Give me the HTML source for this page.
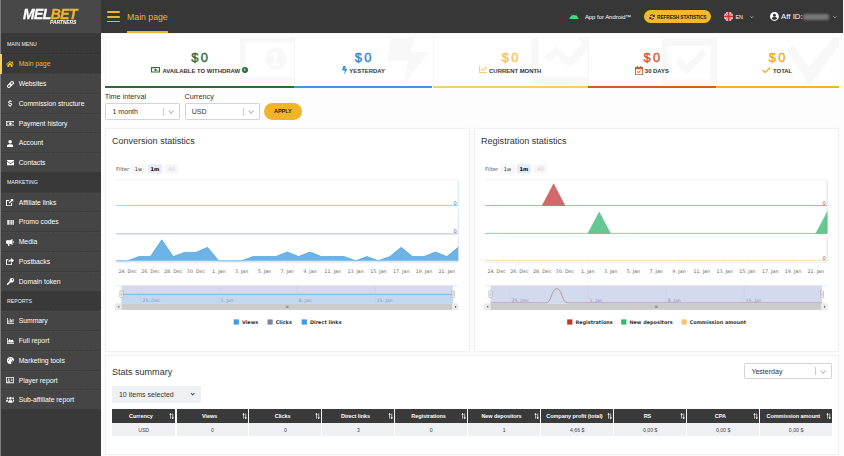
<!DOCTYPE html>
<html lang="en">
<head>
<meta charset="utf-8">
<title>Main page</title>
<style>
*{box-sizing:border-box;margin:0;padding:0}
html,body{width:844px;height:456px;overflow:hidden}
body{position:relative;background:#fdfdfd;font-family:"Liberation Sans",sans-serif;color:#333;font-size:7px}
#wrap{position:absolute;left:0;top:0;width:844px;height:456px;}
/* sidebar */
#side{position:absolute;left:0;top:0;width:100.5px;height:456px;background:#393939}
#side .redge{position:absolute;left:99.600px;top:33.400px;width:0.900px;height:423px;background-image:repeating-linear-gradient(180deg,rgba(0,0,0,.32) 0,rgba(0,0,0,.32) 1px,rgba(0,0,0,.08) 1px,rgba(0,0,0,.08) 2px)}
#side .edge{position:absolute;left:0;top:0;width:1.200px;height:456px;background:#7d7d7d}
#logo{position:absolute;left:0;top:0;width:100.5px;height:33.400px;background:#484848}
#logo .l1{position:absolute;left:22.600px;top:8.400px;font-size:14.300px;font-weight:bold;font-style:italic;color:#fff;letter-spacing:-0.6px;line-height:13px;transform:scaleX(0.975);transform-origin:0 0;-webkit-text-stroke:0.3px}
#logo .l1 b{color:#f0b429}
#logo .l2{position:absolute;left:50px;top:19.800px;font-size:5.100px;transform:scaleX(0.985);transform-origin:0 0;font-weight:bold;font-style:italic;color:#fff;letter-spacing:-0.1px;line-height:5px}
.mt{position:absolute;left:1px;width:99.5px;height:19.760px;background:#393939;color:#f2f2f2;font-size:5.200px;line-height:21.400px;padding-left:6px}
.mi{position:absolute;left:1px;width:99.5px;height:19.760px;background:#454545;color:#fff;font-size:6.800px;line-height:19.200px;padding-left:17.700px;background-image:repeating-linear-gradient(90deg,rgba(255,255,255,.065) 0,rgba(255,255,255,.065) 1px,transparent 1px,transparent 4.120px);background-size:100% 0.800px;background-repeat:no-repeat;border-top:0.500px solid rgba(0,0,0,.1);white-space:nowrap}
.mi.act{background-color:#393939;color:#f0b429}
.mi.act:before{content:"";position:absolute;left:-1px;top:-0.600px;width:1.800px;height:19.760px;background:#f5d06a;z-index:3}
.mi svg{position:absolute;fill:#fff}
.mi.act svg{fill:#f0b429}
/* header */
#head{position:absolute;left:100.5px;top:0;width:742.600px;height:33.300px;background:#373737;box-shadow:0 0.300px 0.600px rgba(0,0,0,.5)}
#burger{position:absolute;left:6.700px;top:11.300px;width:13px;height:11px}
#burger i{position:absolute;left:0;width:13px;height:1.700px;border-radius:1px;background:#f0b429}
#ptitle{position:absolute;left:26.600px;top:0;height:33.300px;line-height:34.800px;font-size:8.700px;color:#f0b429;border-bottom:2.300px solid #f0b429;white-space:nowrap}
.hr{position:absolute;top:0;height:33px;line-height:34.400px;color:#fff;white-space:nowrap}
#refresh{position:absolute;left:543.200px;top:10.100px;width:67.400px;height:13px;border-radius:6.500px;background:#f1b92d;color:#222;font-size:4.800px;font-weight:bold;line-height:15.400px;text-align:left;white-space:nowrap;padding-left:13.400px;letter-spacing:-0.12px}
/* cards */
.card{position:absolute;top:37.400px;height:50.500px;background:#fff;border-bottom:2.200px solid #000;box-shadow:inset 0.600px 0.600px 0 #f0f0f0;overflow:hidden}
.card .val{position:absolute;left:0;right:0;top:13.700px;text-align:center;font-size:12.900px;font-weight:normal;-webkit-text-stroke:0.400px;line-height:14px;letter-spacing:0.3px;word-spacing:-1.800px}
.card .lab{position:absolute;left:0;right:0;top:29.300px;text-align:center;font-size:5.930px;font-weight:bold;color:#333;line-height:8px;white-space:nowrap}
.card .ci{display:inline-block;vertical-align:middle;margin-right:2px;line-height:0;position:relative;top:-1.200px}
.card .ci svg{display:block}
.card .info{display:inline-block;width:6.300px;height:6.300px;border-radius:50%;background:#2f6a34;color:#fff;font-size:5px;font-weight:bold;line-height:6.500px;text-align:center;margin-left:1.500px;vertical-align:middle;position:relative;top:-1px;font-family:"Liberation Serif",serif}
.wm{position:absolute}
/* filters */
.flab{position:absolute;top:92.600px;font-size:7.250px;color:#333;line-height:8px}
.sel{position:absolute;height:16.600px;background:#fff;border:0.600px solid #d4d4d4;border-radius:1.300px;font-size:7.050px;line-height:15.400px;padding-left:6.200px;color:#333}
.sel:before{content:"";position:absolute;right:15.400px;top:3.500px;width:0.500px;height:8.300px;background:#ccc}
.sel:after{content:"";position:absolute;right:5.800px;top:5.200px;width:3.300px;height:3.300px;border-right:0.900px solid #b8b8b8;border-bottom:0.900px solid #b8b8b8;transform:rotate(45deg)}
#apply{position:absolute;left:264.200px;top:103px;width:37.400px;height:16.700px;border-radius:8.400px;background:#f0b429;color:#222;font-size:5.500px;font-weight:bold;line-height:17px;text-align:center}
/* panels */
.panel{position:absolute;background:#fff;border:0.600px solid #f1f1f1;box-shadow:0 0 1px #f4f4f4}
.ptl{position:absolute;font-size:9.050px;color:#333;line-height:10px;white-space:nowrap}
svg.chart{position:absolute;font-family:"DejaVu Sans","Liberation Sans",sans-serif}
svg.chart text{fill:#555}
svg.chart .flt{font-size:5.350px;fill:#666}
svg.chart .b{font-size:5.100px;fill:#333}
svg.chart .bs{font-size:5.100px;fill:#000;font-weight:bold}
svg.chart .bd{font-size:5.100px;fill:#ccc}
svg.chart .ax{font-size:5.100px;fill:#666}
svg.chart .xl{font-size:4.750px;fill:#666}
svg.chart .nl{font-size:4.600px;fill:#9094b4}
svg.chart .lg{font-size:4.950px;fill:#333;font-weight:bold}
/* table */
#isel{position:absolute;left:111.800px;top:385.900px;width:88.800px;height:16.800px;background:#eef0f4;font-size:7.050px;line-height:17px;padding-left:7.100px;color:#333}
#isel:after{content:"";position:absolute;left:79px;top:6.500px;width:2.400px;height:2.400px;border-right:0.600px solid #555;border-bottom:0.600px solid #555;transform:rotate(45deg)}
.th{position:absolute;top:408.600px;height:14.200px;background:#3a3a3a;color:#fff;font-size:5.500px;font-weight:bold;line-height:15.600px;text-align:center;border-right:0.550px solid #fff;white-space:nowrap;padding-right:5.500px;letter-spacing:-0.05px}
.th svg{position:absolute;right:1px;top:4.300px;width:5.200px;height:6.200px}
.td{position:absolute;top:422.800px;height:13px;background:#eef0f4;color:#444;font-size:5.200px;line-height:15.600px;text-align:center;border-right:0.550px solid #fff}
</style>
</head>
<body>
<div id="wrap">
<div id="side">
  <div id="logo"><div class="l1">MEL<b>BET</b></div><div class="l2">PARTNERS</div></div>
  <div class="mt" style="top:33.65px">MAIN MENU</div>
  <div class="mi act" style="top:53.41px"><svg viewBox="0 0 18 14" style="left:5.00px;top:6.79px;width:8.00px;height:6.22px"><path d="M9 0 .2 7.300l1.100 1.300L9 2.300l7.700 6.300 1.100-1.300-2.300-1.900V1h-2.300v2.500zM3 8.600 9 3.700l6 4.900V14h-4.300V9.800H7.300V14H3z"/></svg>Main page</div>
  <div class="mi" style="top:73.17px"><svg viewBox="0 0 16 16" style="left:5.50px;top:6.40px;width:7.00px;height:7.00px"><g transform="rotate(-45 8 8)" fill="none" stroke="#fff" stroke-width="2.300"><rect x="-0.300" y="5.100" width="9.600" height="5.800" rx="2.900"/><rect x="6.700" y="5.100" width="9.600" height="5.800" rx="2.900"/></g></svg>Websites</div>
  <div class="mi" style="top:92.93px"><svg viewBox="0 0 9 16" style="left:6.95px;top:6.26px;width:4.10px;height:7.29px"><path d="M3.600 0h1.900v1.700c1.600.2 2.800 1.100 3.200 2.500l-1.800.7C6.600 4 5.800 3.500 4.600 3.500c-1.300 0-2 .5-2 1.400 0 .8.600 1.200 2.500 1.600C7.500 7 9 7.800 9 10c0 1.700-1.300 2.900-3.500 3.100V16H3.600v-2.900C1.600 12.900.3 11.800 0 10.100l1.900-.5c.3 1.100 1.100 1.700 2.600 1.700 1.400 0 2.200-.5 2.200-1.500S5.900 8.500 4 8.100C1.600 7.600.4 6.800.4 4.800c0-1.700 1.300-2.900 3.200-3.200z"/></svg>Commission structure</div>
  <div class="mi" style="top:112.69px"><svg viewBox="0 0 20 12" style="left:4.60px;top:7.26px;width:8.80px;height:5.28px"><path fill-rule="evenodd" d="M0 0h20v12H0zM1.800 1.800v8.400h16.400V1.800zM10 3a3 3 0 1 1 0 6 3 3 0 0 1 0-6zM3 3h2.400A2.400 2.400 0 0 1 3 5.400zM17 3v2.400A2.400 2.400 0 0 1 14.600 3zM3 9V6.600A2.400 2.400 0 0 1 5.400 9zM17 9h-2.400A2.400 2.400 0 0 1 17 6.600z"/></svg>Payment history</div>
  <div class="mi" style="top:132.45px"><svg viewBox="0 0 14 16" style="left:5.85px;top:6.30px;width:6.30px;height:7.20px"><path d="M7 0a4 4 0 1 1 0 8 4 4 0 0 1 0-8zM0 16v-2.200C0 11.100 2.200 9.500 4.500 9.500h5c2.300 0 4.500 1.600 4.500 4.300V16z"/></svg>Account</div>
  <div class="mi" style="top:152.21px"><svg viewBox="0 0 16 12" style="left:5.50px;top:7.28px;width:7.00px;height:5.25px"><path d="M0 0h16v2.200L8 7.300 0 2.200zM0 4.200l8 5.100 8-5.100V12H0z"/></svg>Contacts</div>
  <div class="mt" style="top:171.97px">MARKETING</div>
  <div class="mi" style="top:191.73px"><svg viewBox="0 0 16 16" style="left:5.40px;top:6.30px;width:7.20px;height:7.20px"><path d="M9.300 0H16v6.700l-2.300-2.300-5.800 5.800-2.100-2.100 5.800-5.800zM0 2.500h7v2.200H2.200v9.100h9.100V9h2.200v7H0z"/></svg>Affiliate links</div>
  <div class="mi" style="top:211.49px"><svg viewBox="0 0 16 11" style="left:5.50px;top:7.49px;width:7.00px;height:4.81px"><path d="M0 0h1.600v11H0zM2.600 0h2.600v11H2.600zM6.200 0h1.100v11H6.200zM8.400 0h2.600v11H8.400zM12 0h1.100v11H12zM14.200 0H16v11h-1.800z"/></svg>Promo codes</div>
  <div class="mi" style="top:231.25px"><svg viewBox="0 0 18 16" style="left:5.00px;top:6.34px;width:8.00px;height:7.11px"><path d="M14.500 0v13.500L8.500 10.700H6.900l1.300 4.800H5.100L3.800 10.700H2A2 2 0 0 1 0 8.700V5a2 2 0 0 1 2-2h6.500zM15.800 4.600c1.300.3 2.200 1.100 2.200 2.200s-.9 1.900-2.200 2.200z"/></svg>Media</div>
  <div class="mi" style="top:251.01px"><svg viewBox="0 0 18 16" style="left:5.00px;top:6.34px;width:8.00px;height:7.11px"><path d="M18 5.800 11.800 0v3.300C7.500 3.400 5.200 6.200 5.200 10.500 6.500 8.300 8.400 7.400 11.800 7.400v3.800zM0 2.800h5.500V5H2.200v8.800H11V11.500h2.200V16H0z"/></svg>Postbacks</div>
  <div class="mi" style="top:270.77px"><svg viewBox="0 0 16 16" style="left:5.50px;top:6.40px;width:7.00px;height:7.00px"><path d="M11 0a5 5 0 1 1-1.700 9.700L8 11H6v2H4v2H2v1H0v-3l6.300-6.300A5 5 0 0 1 11 0zm1.300 2.500a1.600 1.600 0 1 0 0 3.200 1.600 1.600 0 0 0 0-3.200z"/></svg>Domain token</div>
  <div class="mt" style="top:290.53px">REPORTS</div>
  <div class="mi" style="top:310.29px"><svg viewBox="0 0 16 13" style="left:5.50px;top:7.06px;width:7.00px;height:5.69px"><path d="M0 0h1.800v11.200H16V13H0zM3.200 5.500h2v4.700h-2zM6.400 1.500h2v8.700h-2zM9.600 4h2v6.200h-2zM12.800 2.500h2v7.700h-2z"/></svg>Summary</div>
  <div class="mi" style="top:330.05px"><svg viewBox="0 0 16 13" style="left:5.50px;top:7.06px;width:7.00px;height:5.69px"><path d="M0 0h1.800v11.200H16V13H0zM3 10.200V6.500L6 2.500l3 3 2.800-2.300L15 6.500v3.700z"/></svg>Full report</div>
  <div class="mi" style="top:349.81px"><svg viewBox="0 0 16 16" style="left:5.50px;top:6.40px;width:7.00px;height:7.00px"><path d="M8 0a8 8 0 0 0 0 16c1.400 0 2.100-.9 2.100-1.900 0-.5-.2-.9-.5-1.300-.2-.3-.4-.7-.4-1.100 0-.9.700-1.500 1.500-1.500h1.900A3.400 3.400 0 0 0 16 6.800C16 3 12.400 0 8 0zM3.400 8.600a1.200 1.200 0 1 1 0-2.400 1.200 1.200 0 0 1 0 2.400zm2.300-3.400a1.200 1.200 0 1 1 0-2.400 1.200 1.200 0 0 1 0 2.400zm4.600 0a1.200 1.200 0 1 1 0-2.400 1.200 1.200 0 0 1 0 2.400zm2.500 3.400a1.200 1.200 0 1 1 0-2.400 1.200 1.200 0 0 1 0 2.400z"/></svg>Marketing tools</div>
  <div class="mi" style="top:369.57px"><svg viewBox="0 0 18 14" style="left:5.05px;top:6.83px;width:7.90px;height:6.14px"><path fill-rule="evenodd" d="M0 0h18v14H0zM1.800 1.800v10.400h14.400V1.800zM6.300 3.500a1.800 1.800 0 1 1 0 3.600 1.800 1.800 0 0 1 0-3.600zM3.300 10.600c0-1.500 1.300-2.600 3-2.600s3 1.100 3 2.600zM11 4.200h4v1.500h-4zM11 7h4v1.500h-4z"/></svg>Player report</div>
  <div class="mi" style="top:389.33px"><svg viewBox="0 0 20 13" style="left:4.60px;top:7.04px;width:8.80px;height:5.72px"><path d="M10 0a3 3 0 1 1 0 6 3 3 0 0 1 0-6zM3.600.8a2.200 2.200 0 1 1 0 4.400 2.200 2.200 0 0 1 0-4.400zm12.800 0a2.200 2.200 0 1 1 0 4.400 2.200 2.200 0 0 1 0-4.400zM5 13v-1.800C5 8.900 6.900 7.500 8.800 7.500h2.400c1.900 0 3.800 1.400 3.800 3.700V13zM0 11v-1.400C0 7.800 1.400 6.500 3.100 6.500c.8 0 1.500.2 2.100.6C4.100 8 3.500 9.400 3.500 11zM20 11h-3.500c0-1.600-.6-3-1.700-3.900.6-.4 1.300-.6 2.100-.6 1.700 0 3.100 1.300 3.100 3.100z"/></svg>Sub-affiliate report</div>
  <div class="redge"></div>
  <div class="edge"></div>
</div>
<div id="head">
  <div id="burger"><i style="top:0"></i><i style="top:4.700px"></i><i style="top:9.400px"></i></div>
  <div id="ptitle">Main page</div>
  <svg viewBox="0 0 20 12" style="position:absolute;left:468.100px;top:13.600px;width:10px;height:5.800px"><path fill="#3ddc84" d="M14.300 3.200 16 .4l-.6-.4-1.800 2.900A9 9 0 0 0 10 2.200c-1.300 0-2.500.3-3.600.7L4.600 0 4 .4l1.700 2.800C2.600 4.800.5 8 0 12h20c-.5-4-2.600-7.200-5.700-8.800z"/></svg>
  <div class="hr" style="left:484.400px;font-size:5.900px">App for Android™</div>
  <div id="refresh"><svg viewBox="0 0 16 16" style="position:absolute;left:5.100px;top:4.200px;width:6px;height:6px"><path d="M13.400 6.600A5.600 5.600 0 0 0 3 5.200M2.600 9.400A5.600 5.600 0 0 0 13 10.800" stroke="#222" stroke-width="2.600" fill="none"/><path d="M15.300 1.200v6.300H9zM.7 14.800V8.500H7z" fill="#222"/></svg>REFRESH STATISTICS</div>
  <svg viewBox="0 0 16 16" style="position:absolute;left:623.400px;top:12.100px;width:9.200px;height:9.200px"><defs><clipPath id="fc"><circle cx="8" cy="8" r="8"/></clipPath></defs><g clip-path="url(#fc)"><rect width="16" height="16" fill="#e9e6e6"/><path d="M0 0l16 16M16 0L0 16" stroke="#d9534f" stroke-width="1.800"/><path d="M5.200 0h5.600v16H5.200zM0 5.200h16v5.600H0z" fill="#f4f4f4"/><path d="M6.300 0h3.400v16H6.300zM0 6.300h16v3.400H0z" fill="#d0333a"/></g></svg>
  <div class="hr" style="left:635px;font-size:5.400px">EN</div>
  <svg viewBox="0 0 10 6" style="position:absolute;left:649.800px;top:15.700px;width:3.600px;height:2.200px"><path d="M1 1l4 4 4-4" fill="none" stroke="#e4e4e4" stroke-width="1.700"/></svg>
  <svg viewBox="0 0 16 16" style="position:absolute;left:669.500px;top:12.200px;width:8.900px;height:8.900px"><path fill-rule="evenodd" fill="#fff" d="M8 0a8 8 0 1 1 0 16A8 8 0 0 1 8 0zm0 3a2.800 2.800 0 1 0 0 5.600A2.800 2.800 0 0 0 8 3zm0 11.200c2 0 3.800-1 4.800-2.600-.1-1.600-3.200-2.400-4.800-2.400s-4.700.8-4.800 2.400c1 1.600 2.800 2.600 4.800 2.600z"/></svg>
  <div class="hr" style="left:680.600px;font-size:7.800px">Aff ID:</div>
  <div style="position:absolute;left:702.500px;top:13.800px;width:25.500px;height:6.500px;background:#8d8d8d;border-radius:2px;filter:blur(1.100px);opacity:.75"></div>
  <svg viewBox="0 0 10 6" style="position:absolute;left:732.900px;top:15.800px;width:3.600px;height:2.200px"><path d="M1 1l4 4 4-4" fill="none" stroke="#eee" stroke-width="1.700"/></svg>
</div>

<div class="card" style="left:105.10px;width:189.10px;border-bottom-color:#2e6b30"><svg class="wm" viewBox="0 0 60 50" style="right:0;top:0;width:60px;height:50px"><path fill-rule="evenodd" fill="#f8f8f8" d="M6 0h70v45.500H6zM11.500 5.500a5 5 0 0 1-0 0v34.500h60V5.500zM42 10.500a11 11 0 1 1 0 22 11 11 0 0 1 0-22zM40.200 15l-3 1.800v2.500l2.400-.8v7.500h-2.600v2.500h8.500v-2.500h-2.500V15z"/></svg><div class="val" style="color:#2f6a34">$ 0</div><div class="lab"><span class="ci" style="fill:#2e6b30"><svg viewBox="0 0 20 12" style="width:9px;height:5.400px"><path fill-rule="evenodd" d="M0 0h20v12H0zM2.200 2.200v7.600h15.600V2.200z"/><circle cx="10" cy="6" r="2.700"/><path d="M3.400 3.200h2.200v1.600H3.400zM14.400 7.200h2.200v1.600h-2.200z"/></svg></span>AVAILABLE TO WITHDRAW<span class="info">i</span></div></div>
<div class="card" style="left:294.20px;width:138.30px;border-bottom-color:#3b9cdd"><svg class="wm" viewBox="0 0 50 50" style="right:0;top:0;width:50px;height:50px"><path fill="#f8f8f8" d="M8.500 0h24.900l-5 15.300h18.700L22.100 46.500l3.900-22.500H5.300z"/></svg><div class="val" style="color:#2f86c8">$ 0</div><div class="lab"><span class="ci" style="fill:#3b9cdd"><svg viewBox="0 0 10 16" style="width:5.600px;height:9px"><path d="M2 0h5L5.800 5H10L3.500 16 5 8H0z"/></svg></span>YESTERDAY</div></div>
<div class="card" style="left:432.50px;width:155.50px;border-bottom-color:#f9cc68"><svg class="wm" viewBox="0 0 60 50" style="right:0;top:0;width:60px;height:50px"><path fill="#f8f8f8" d="M3.500 0h7.500v40h49v7.500H3.500zM16 20l12.500-11 12.500 12.500 14-15.500-6-5h11v16l-0-0-0 0V12L41.500 30.500 28.500 18.500 21 25.500z"/></svg><div class="val" style="color:#f7c259">$ 0</div><div class="lab"><span class="ci" style="fill:#f9cc68"><svg viewBox="0 0 16 14" style="width:8px;height:7px"><path d="M0 0h1.800v12.200H16V14H0zM3.200 9.500 6.500 5l2.700 2.300L12.500 3l-1.500-1.300h4.500v4.300L14 4.500 9.500 10 6.800 7.700 4.600 10.600z"/></svg></span>CURRENT MONTH</div></div>
<div class="card" style="left:588.00px;width:127.90px;border-bottom-color:#cc5f2c"><svg class="wm" viewBox="0 0 56 50" style="right:0;top:0;width:56px;height:50px"><path fill-rule="evenodd" fill="#f8f8f8" d="M2 0h54v48H2zM7.500 9v33.500h43V9zM15.500 26l5-5 6.500 6.500 15-15 5 5-20 20z"/></svg><div class="val" style="color:#d05a2e">$ 0</div><div class="lab"><span class="ci" style="fill:#cc5f2c"><svg viewBox="0 0 14 16" style="width:8px;height:9.200px"><path fill-rule="evenodd" d="M3 0h1.800v1.800h4.400V0H11v1.800h3V16H0V1.800h3zM1.600 5.500v8.900h10.800V5.500zM6.200 12.500 3.600 9.900l1.100-1.100 1.500 1.500 3.100-3.100 1.100 1.100z"/></svg></span>30 DAYS</div></div>
<div class="card" style="left:715.90px;width:122.70px;border-bottom-color:#f0b429"><svg class="wm" viewBox="0 0 60 50" style="right:0;top:0;width:60px;height:50px"><path fill="#f8f8f8" d="M7.500 12.500l6.500-4.500 15.500 22L55 0h5v9L30.500 49.500z"/></svg><div class="val" style="color:#f0ac1c">$ 0</div><div class="lab"><span class="ci" style="fill:#f0b429"><svg viewBox="0 0 16 12" style="width:8.800px;height:6.600px"><path d="M5.500 12 0 6.500l2-2 3.500 3.500L14 0l2 2z"/></svg></span>TOTAL</div></div>

<div class="flab" style="left:104.800px">Time interval</div>
<div class="flab" style="left:184.400px">Currency</div>
<div class="sel" style="left:105.300px;top:103.300px;width:74.400px">1 month</div>
<div class="sel" style="left:184.500px;top:103.300px;width:75.100px">USD</div>
<div id="apply">APPLY</div>

<div class="panel" style="left:104.900px;top:127.800px;width:365.300px;height:224px"></div>
<div class="panel" style="left:474px;top:127.800px;width:365px;height:224px"></div>
<div class="ptl" style="left:111.900px;top:136px">Conversion statistics</div>
<div class="ptl" style="left:481px;top:136px">Registration statistics</div>
<svg class="chart" viewBox="0 0 365 222" width="365" height="222" style="left:103.90px;top:128.500px">
<text x="12.0" y="42.00" class="flt">Filter</text>
<rect x="27.30" y="35.30" width="14.20" height="9.3" rx="0.9" fill="#f7f7f7"/>
<text x="34.40" y="41.80" class="b" text-anchor="middle">1w</text>
<rect x="43.90" y="35.30" width="14.20" height="9.3" rx="0.9" fill="#e6ebf5"/>
<text x="51.00" y="41.80" class="bs" text-anchor="middle">1m</text>
<rect x="60.50" y="35.30" width="13.80" height="9.3" rx="0.9" fill="#f7f7f7"/>
<text x="67.40" y="41.80" class="bd" text-anchor="middle">All</text>
<path d="M12.20 50.80H354.20" stroke="#e6e6e6" stroke-width="0.6"/>
<path d="M12.20 77.80H354.20" stroke="#ececec" stroke-width="0.5"/>
<path d="M354.20 51.60V76.50" stroke="#c3d0ea" stroke-width="0.7"/>
<text x="352.70" y="75.60" class="ax" text-anchor="end">0</text>
<path d="M12.20 106.00H354.20" stroke="#ececec" stroke-width="0.5"/>
<path d="M354.20 79.60V104.70" stroke="#c3d0ea" stroke-width="0.7"/>
<text x="352.70" y="103.80" class="ax" text-anchor="end">0</text>
<path d="M12.20 133.30H354.20" stroke="#ececec" stroke-width="0.5"/>
<path d="M354.20 107.60V132.00" stroke="#c3d0ea" stroke-width="0.7"/>
<text x="352.70" y="131.10" class="ax" text-anchor="end">0</text>
<path d="M12.20 76.40H354.20" stroke="#8ed0ee" stroke-width="0.9"/>
<path d="M12.20 104.80H354.20" stroke="#9b9fd0" stroke-width="0.7"/>
<path d="M12.20 131.80 L12.20 131.80 L23.60 131.80 L35.00 127.60 L46.40 127.60 L57.80 110.80 L69.20 127.60 L80.60 123.40 L92.00 123.40 L103.40 118.36 L114.80 131.80 L126.20 131.80 L137.60 131.80 L149.00 127.60 L160.40 127.60 L171.80 127.60 L183.20 122.98 L194.60 127.60 L206.00 122.98 L217.40 127.60 L228.80 127.60 L240.20 127.60 L251.60 131.80 L263.00 127.60 L274.40 131.80 L285.80 127.60 L297.20 118.36 L308.60 127.60 L320.00 127.60 L331.40 122.98 L342.80 127.60 L354.20 118.36 L354.20 131.80Z" fill="#6db3e6"/>
<path d="M12.20 131.80 L12.20 131.80 L23.60 131.80 L35.00 127.60 L46.40 127.60 L57.80 110.80 L69.20 127.60 L80.60 123.40 L92.00 123.40 L103.40 118.36 L114.80 131.80 L126.20 131.80 L137.60 131.80 L149.00 127.60 L160.40 127.60 L171.80 127.60 L183.20 122.98 L194.60 127.60 L206.00 122.98 L217.40 127.60 L228.80 127.60 L240.20 127.60 L251.60 131.80 L263.00 127.60 L274.40 131.80 L285.80 127.60 L297.20 118.36 L308.60 127.60 L320.00 127.60 L331.40 122.98 L342.80 127.60 L354.20 118.36" fill="none" stroke="#459fe0" stroke-width="0.7"/>
<path d="M12.20 132.00H354.20" stroke="#7cc4ec" stroke-width="0.6"/>
<path d="M12.20 133.70H354.20" stroke="#dfe6f3" stroke-width="0.5"/>
<path d="M23.60 133.70v2.200" stroke="#dfe6f3" stroke-width="0.5"/>
<text x="23.60" y="144.00" class="xl" text-anchor="middle">24. Dec</text>
<path d="M46.40 133.70v2.200" stroke="#dfe6f3" stroke-width="0.5"/>
<text x="46.40" y="144.00" class="xl" text-anchor="middle">26. Dec</text>
<path d="M69.20 133.70v2.200" stroke="#dfe6f3" stroke-width="0.5"/>
<text x="69.20" y="144.00" class="xl" text-anchor="middle">28. Dec</text>
<path d="M92.00 133.70v2.200" stroke="#dfe6f3" stroke-width="0.5"/>
<text x="92.00" y="144.00" class="xl" text-anchor="middle">30. Dec</text>
<path d="M114.80 133.70v2.200" stroke="#dfe6f3" stroke-width="0.5"/>
<text x="114.80" y="144.00" class="xl" text-anchor="middle">1. Jan</text>
<path d="M137.60 133.70v2.200" stroke="#dfe6f3" stroke-width="0.5"/>
<text x="137.60" y="144.00" class="xl" text-anchor="middle">3. Jan</text>
<path d="M160.40 133.70v2.200" stroke="#dfe6f3" stroke-width="0.5"/>
<text x="160.40" y="144.00" class="xl" text-anchor="middle">5. Jan</text>
<path d="M183.20 133.70v2.200" stroke="#dfe6f3" stroke-width="0.5"/>
<text x="183.20" y="144.00" class="xl" text-anchor="middle">7. Jan</text>
<path d="M206.00 133.70v2.200" stroke="#dfe6f3" stroke-width="0.5"/>
<text x="206.00" y="144.00" class="xl" text-anchor="middle">9. Jan</text>
<path d="M228.80 133.70v2.200" stroke="#dfe6f3" stroke-width="0.5"/>
<text x="228.80" y="144.00" class="xl" text-anchor="middle">11. Jan</text>
<path d="M251.60 133.70v2.200" stroke="#dfe6f3" stroke-width="0.5"/>
<text x="251.60" y="144.00" class="xl" text-anchor="middle">13. Jan</text>
<path d="M274.40 133.70v2.200" stroke="#dfe6f3" stroke-width="0.5"/>
<text x="274.40" y="144.00" class="xl" text-anchor="middle">15. Jan</text>
<path d="M297.20 133.70v2.200" stroke="#dfe6f3" stroke-width="0.5"/>
<text x="297.20" y="144.00" class="xl" text-anchor="middle">17. Jan</text>
<path d="M320.00 133.70v2.200" stroke="#dfe6f3" stroke-width="0.5"/>
<text x="320.00" y="144.00" class="xl" text-anchor="middle">19. Jan</text>
<path d="M342.80 133.70v2.200" stroke="#dfe6f3" stroke-width="0.5"/>
<text x="342.80" y="144.00" class="xl" text-anchor="middle">21. Jan</text>
<rect x="17.50" y="156.70" width="331.40" height="18.00" fill="#d2daee"/>
<path d="M12.20 156.70H354.20" stroke="#d8d8d8" stroke-width="0.5"/>
<rect x="17.50" y="165.30" width="331.40" height="9.40" fill="#bcd6f0" opacity="0.75"/>
<path d="M17.50 165.30H348.90" stroke="#5aa7e0" stroke-width="0.7"/>
<path d="M37.20 156.70V174.70" stroke="#c5cde2" stroke-width="0.4"/>
<text x="38.60" y="172.70" class="nl">25. Dec</text>
<path d="M115.20 156.70V174.70" stroke="#c5cde2" stroke-width="0.4"/>
<text x="116.60" y="172.70" class="nl">1. Jan</text>
<path d="M193.30 156.70V174.70" stroke="#c5cde2" stroke-width="0.4"/>
<text x="194.70" y="172.70" class="nl">8. Jan</text>
<path d="M271.30 156.70V174.70" stroke="#c5cde2" stroke-width="0.4"/>
<text x="272.70" y="172.70" class="nl">15. Jan</text>
<rect x="15.90" y="162.00" width="3.2" height="6.600" fill="#f2f2f2" stroke="#999" stroke-width="0.45"/>
<path d="M17.10 163.80v3M17.90 163.80v3" stroke="#999" stroke-width="0.3"/>
<rect x="347.30" y="162.00" width="3.2" height="6.600" fill="#f2f2f2" stroke="#999" stroke-width="0.45"/>
<path d="M348.50 163.80v3M349.30 163.80v3" stroke="#999" stroke-width="0.3"/>
<rect x="11.40" y="174.70" width="342.80" height="6.20" fill="#cccccc"/>
<rect x="11.40" y="174.70" width="6.2" height="6.20" fill="#ebebeb"/>
<rect x="348.00" y="174.70" width="6.2" height="6.20" fill="#ebebeb"/>
<path d="M13.90 177.80l1.300 -1.100v2.200z" fill="#333"/>
<path d="M352.50 177.80l-1.300 -1.100v2.200z" fill="#333"/>
<path d="M182.30 176.80v2M183.20 176.80v2M184.10 176.80v2" stroke="#333" stroke-width="0.4"/>
<rect x="129.70" y="190.40" width="5.2" height="5.2" fill="#3f9ddf"/>
<text x="137.90" y="195.00" class="lg">Views</text>
<rect x="163.50" y="190.40" width="5.2" height="5.2" fill="#7b8794"/>
<text x="171.70" y="195.00" class="lg">Clicks</text>
<rect x="197.70" y="190.40" width="5.2" height="5.2" fill="#3f9ddf"/>
<text x="205.90" y="195.00" class="lg">Direct links</text>
</svg>
<svg class="chart" viewBox="0 0 365 222" width="365" height="222" style="left:472.90px;top:128.500px">
<text x="12.0" y="42.00" class="flt">Filter</text>
<rect x="27.30" y="35.30" width="14.20" height="9.3" rx="0.9" fill="#f7f7f7"/>
<text x="34.40" y="41.80" class="b" text-anchor="middle">1w</text>
<rect x="43.90" y="35.30" width="14.20" height="9.3" rx="0.9" fill="#e6ebf5"/>
<text x="51.00" y="41.80" class="bs" text-anchor="middle">1m</text>
<rect x="60.50" y="35.30" width="13.80" height="9.3" rx="0.9" fill="#f7f7f7"/>
<text x="67.40" y="41.80" class="bd" text-anchor="middle">All</text>
<path d="M12.20 50.80H354.20" stroke="#e6e6e6" stroke-width="0.6"/>
<path d="M12.20 77.80H354.20" stroke="#ececec" stroke-width="0.5"/>
<path d="M354.20 51.60V76.50" stroke="#c3d0ea" stroke-width="0.7"/>
<text x="352.70" y="75.60" class="ax" text-anchor="end">0</text>
<path d="M12.20 106.00H354.20" stroke="#ececec" stroke-width="0.5"/>
<path d="M354.20 79.60V104.70" stroke="#c3d0ea" stroke-width="0.7"/>
<text x="352.70" y="103.80" class="ax" text-anchor="end">0</text>
<path d="M12.20 133.30H354.20" stroke="#ececec" stroke-width="0.5"/>
<path d="M354.20 107.60V132.00" stroke="#c3d0ea" stroke-width="0.7"/>
<text x="352.70" y="131.10" class="ax" text-anchor="end">0</text>
<path d="M12.20 76.50H354.20" stroke="#dc8f8a" stroke-width="0.8"/>
<path d="M69.20 76.50L80.60 54.70L92.00 76.50Z" fill="#d3686a" stroke="#c9504f" stroke-width="0.4"/>
<path d="M12.20 104.40H354.20" stroke="#6fd49b" stroke-width="0.9"/>
<path d="M114.80 104.40L126.20 83.10L137.60 104.40Z" fill="#66c791" stroke="#46c07c" stroke-width="0.4"/>
<path d="M342.80 104.40L354.20 83.10V104.40Z" fill="#66c791" stroke="#46c07c" stroke-width="0.4"/>
<path d="M12.20 131.60H354.20" stroke="#fbdcae" stroke-width="1.0"/>
<path d="M12.20 133.70H354.20" stroke="#dfe6f3" stroke-width="0.5"/>
<path d="M23.60 133.70v2.200" stroke="#dfe6f3" stroke-width="0.5"/>
<text x="23.60" y="144.00" class="xl" text-anchor="middle">24. Dec</text>
<path d="M46.40 133.70v2.200" stroke="#dfe6f3" stroke-width="0.5"/>
<text x="46.40" y="144.00" class="xl" text-anchor="middle">26. Dec</text>
<path d="M69.20 133.70v2.200" stroke="#dfe6f3" stroke-width="0.5"/>
<text x="69.20" y="144.00" class="xl" text-anchor="middle">28. Dec</text>
<path d="M92.00 133.70v2.200" stroke="#dfe6f3" stroke-width="0.5"/>
<text x="92.00" y="144.00" class="xl" text-anchor="middle">30. Dec</text>
<path d="M114.80 133.70v2.200" stroke="#dfe6f3" stroke-width="0.5"/>
<text x="114.80" y="144.00" class="xl" text-anchor="middle">1. Jan</text>
<path d="M137.60 133.70v2.200" stroke="#dfe6f3" stroke-width="0.5"/>
<text x="137.60" y="144.00" class="xl" text-anchor="middle">3. Jan</text>
<path d="M160.40 133.70v2.200" stroke="#dfe6f3" stroke-width="0.5"/>
<text x="160.40" y="144.00" class="xl" text-anchor="middle">5. Jan</text>
<path d="M183.20 133.70v2.200" stroke="#dfe6f3" stroke-width="0.5"/>
<text x="183.20" y="144.00" class="xl" text-anchor="middle">7. Jan</text>
<path d="M206.00 133.70v2.200" stroke="#dfe6f3" stroke-width="0.5"/>
<text x="206.00" y="144.00" class="xl" text-anchor="middle">9. Jan</text>
<path d="M228.80 133.70v2.200" stroke="#dfe6f3" stroke-width="0.5"/>
<text x="228.80" y="144.00" class="xl" text-anchor="middle">11. Jan</text>
<path d="M251.60 133.70v2.200" stroke="#dfe6f3" stroke-width="0.5"/>
<text x="251.60" y="144.00" class="xl" text-anchor="middle">13. Jan</text>
<path d="M274.40 133.70v2.200" stroke="#dfe6f3" stroke-width="0.5"/>
<text x="274.40" y="144.00" class="xl" text-anchor="middle">15. Jan</text>
<path d="M297.20 133.70v2.200" stroke="#dfe6f3" stroke-width="0.5"/>
<text x="297.20" y="144.00" class="xl" text-anchor="middle">17. Jan</text>
<path d="M320.00 133.70v2.200" stroke="#dfe6f3" stroke-width="0.5"/>
<text x="320.00" y="144.00" class="xl" text-anchor="middle">19. Jan</text>
<path d="M342.80 133.70v2.200" stroke="#dfe6f3" stroke-width="0.5"/>
<text x="342.80" y="144.00" class="xl" text-anchor="middle">21. Jan</text>
<rect x="17.50" y="156.70" width="331.40" height="18.00" fill="#d2daee"/>
<path d="M12.20 156.70H354.20" stroke="#d8d8d8" stroke-width="0.5"/>
<path d="M17.50 173.90H72.73C78.81 173.90 78.26 159.70 83.78 159.70C89.30 159.70 88.75 173.90 94.83 173.90H348.90" fill="none" stroke="#b06a78" stroke-width="0.6"/>
<path d="M37.20 156.70V174.70" stroke="#c5cde2" stroke-width="0.4"/>
<text x="38.60" y="172.70" class="nl">25. Dec</text>
<path d="M115.20 156.70V174.70" stroke="#c5cde2" stroke-width="0.4"/>
<text x="116.60" y="172.70" class="nl">1. Jan</text>
<path d="M193.30 156.70V174.70" stroke="#c5cde2" stroke-width="0.4"/>
<text x="194.70" y="172.70" class="nl">8. Jan</text>
<path d="M271.30 156.70V174.70" stroke="#c5cde2" stroke-width="0.4"/>
<text x="272.70" y="172.70" class="nl">15. Jan</text>
<rect x="15.90" y="162.00" width="3.2" height="6.600" fill="#f2f2f2" stroke="#999" stroke-width="0.45"/>
<path d="M17.10 163.80v3M17.90 163.80v3" stroke="#999" stroke-width="0.3"/>
<rect x="347.30" y="162.00" width="3.2" height="6.600" fill="#f2f2f2" stroke="#999" stroke-width="0.45"/>
<path d="M348.50 163.80v3M349.30 163.80v3" stroke="#999" stroke-width="0.3"/>
<rect x="11.40" y="174.70" width="342.80" height="6.20" fill="#cccccc"/>
<rect x="11.40" y="174.70" width="6.2" height="6.20" fill="#ebebeb"/>
<rect x="348.00" y="174.70" width="6.2" height="6.20" fill="#ebebeb"/>
<path d="M13.90 177.80l1.300 -1.100v2.200z" fill="#333"/>
<path d="M352.50 177.80l-1.300 -1.100v2.200z" fill="#333"/>
<path d="M182.30 176.80v2M183.20 176.80v2M184.10 176.80v2" stroke="#333" stroke-width="0.4"/>
<rect x="94.20" y="190.40" width="5.2" height="5.2" fill="#c0392b"/>
<text x="102.40" y="195.00" class="lg">Registrations</text>
<rect x="148.20" y="190.40" width="5.2" height="5.2" fill="#2ebd6b"/>
<text x="156.40" y="195.00" class="lg">New depositors</text>
<rect x="208.50" y="190.40" width="5.2" height="5.2" fill="#f8c471"/>
<text x="216.70" y="195.00" class="lg">Commission amount</text>
</svg>

<div class="panel" style="left:104.900px;top:355.100px;width:734.100px;height:99.600px"></div>
<div class="ptl" style="left:111.900px;top:367.200px">Stats summary</div>
<div class="sel" style="left:744.200px;top:362.600px;width:87.600px">Yesterday</div>
<div id="isel">10 items selected</div>
<div class="th" style="left:111.80px;width:64.70px"><span>Currency</span><svg viewBox="0 0 10 12"><path d="M3 1v10M7.200 1v10" stroke="#fff" stroke-width="1.300" fill="none"/><path d="M3 0 .6 3.400h4.800zM7.200 12l-2.400-3.400h4.800z" fill="#fff"/></svg></div>
<div class="th" style="left:176.50px;width:72.95px"><span>Views</span><svg viewBox="0 0 10 12"><path d="M3 1v10M7.200 1v10" stroke="#fff" stroke-width="1.300" fill="none"/><path d="M3 0 .6 3.400h4.800zM7.200 12l-2.400-3.400h4.800z" fill="#fff"/></svg></div>
<div class="th" style="left:249.45px;width:72.95px"><span>Clicks</span><svg viewBox="0 0 10 12"><path d="M3 1v10M7.200 1v10" stroke="#fff" stroke-width="1.300" fill="none"/><path d="M3 0 .6 3.400h4.800zM7.200 12l-2.400-3.400h4.800z" fill="#fff"/></svg></div>
<div class="th" style="left:322.40px;width:72.95px"><span>Direct links</span><svg viewBox="0 0 10 12"><path d="M3 1v10M7.200 1v10" stroke="#fff" stroke-width="1.300" fill="none"/><path d="M3 0 .6 3.400h4.800zM7.200 12l-2.400-3.400h4.800z" fill="#fff"/></svg></div>
<div class="th" style="left:395.35px;width:72.95px"><span>Registrations</span><svg viewBox="0 0 10 12"><path d="M3 1v10M7.200 1v10" stroke="#fff" stroke-width="1.300" fill="none"/><path d="M3 0 .6 3.400h4.800zM7.200 12l-2.400-3.400h4.800z" fill="#fff"/></svg></div>
<div class="th" style="left:468.30px;width:72.95px"><span>New depositors</span><svg viewBox="0 0 10 12"><path d="M3 1v10M7.200 1v10" stroke="#fff" stroke-width="1.300" fill="none"/><path d="M3 0 .6 3.400h4.800zM7.200 12l-2.400-3.400h4.800z" fill="#fff"/></svg></div>
<div class="th" style="left:541.25px;width:72.95px"><span>Company profit (total)</span><svg viewBox="0 0 10 12"><path d="M3 1v10M7.200 1v10" stroke="#fff" stroke-width="1.300" fill="none"/><path d="M3 0 .6 3.400h4.800zM7.200 12l-2.400-3.400h4.800z" fill="#fff"/></svg></div>
<div class="th" style="left:614.20px;width:72.95px"><span>RS</span><svg viewBox="0 0 10 12"><path d="M3 1v10M7.200 1v10" stroke="#fff" stroke-width="1.300" fill="none"/><path d="M3 0 .6 3.400h4.800zM7.200 12l-2.400-3.400h4.800z" fill="#fff"/></svg></div>
<div class="th" style="left:687.15px;width:72.95px"><span>CPA</span><svg viewBox="0 0 10 12"><path d="M3 1v10M7.200 1v10" stroke="#fff" stroke-width="1.300" fill="none"/><path d="M3 0 .6 3.400h4.800zM7.200 12l-2.400-3.400h4.800z" fill="#fff"/></svg></div>
<div class="th" style="left:760.10px;width:72.95px"><span>Commission amount</span><svg viewBox="0 0 10 12"><path d="M3 1v10M7.200 1v10" stroke="#fff" stroke-width="1.300" fill="none"/><path d="M3 0 .6 3.400h4.800zM7.200 12l-2.400-3.400h4.800z" fill="#fff"/></svg></div>
<div class="td" style="left:111.80px;width:64.70px">USD</div>
<div class="td" style="left:176.50px;width:72.95px">0</div>
<div class="td" style="left:249.45px;width:72.95px">0</div>
<div class="td" style="left:322.40px;width:72.95px">3</div>
<div class="td" style="left:395.35px;width:72.95px">0</div>
<div class="td" style="left:468.30px;width:72.95px">1</div>
<div class="td" style="left:541.25px;width:72.95px">4,66 $</div>
<div class="td" style="left:614.20px;width:72.95px">0,00 $</div>
<div class="td" style="left:687.15px;width:72.95px">0,00 $</div>
<div class="td" style="left:760.10px;width:72.95px">0,00 $</div>
</div>
</body>
</html>
